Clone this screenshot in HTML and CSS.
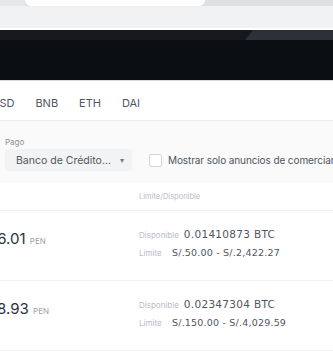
FILE: index.html
```html
<!DOCTYPE html>
<html lang="es">

<head>
    <meta charset="UTF-8">
    <meta name="viewport" content="width=device-width, initial-scale=1.0">
    <title>P2P</title>
    <link rel="stylesheet" href="styles.css">
</head>

<body>
    <div class="chrome">
        <div class="tabstrip">
            <div class="tab-left"></div>
            <div class="tab-active"></div>
            <div class="tab-right"></div>
        </div>
        <div class="addressbar"></div>
    </div>

    <div class="hero">
        <div class="hero-top">
            <div class="hero-strip"></div>
            <div class="hero-panel"></div>
        </div>
    </div>

    <div class="page">
        <nav class="assets">
            <span>BUSD</span>
            <span>BNB</span>
            <span>ETH</span>
            <span>DAI</span>
        </nav>

        <div class="filters">
            <div class="field">
                <label>Pago</label>
                <div class="select">
                    <span>Banco de Crédito...</span>
                    <span class="caret">▾</span>
                </div>
            </div>
            <div class="check">
                <span class="box"></span>
                <span>Mostrar solo anuncios de comerciantes</span>
            </div>
        </div>

        <div class="table-head">
            <span class="col-limit">Limite/Disponible</span>
        </div>

        <div class="row">
            <div class="price">86.01 <small>PEN</small></div>
            <div class="limits">
                <div class="line"><span class="lbl">Disponible</span><span class="val amount">0.01410873 BTC</span></div>
                <div class="line"><span class="lbl lbl-fixed">Limite</span><span class="val">S/.50.00 - S/.2,422.27</span></div>
            </div>
        </div>

        <div class="row">
            <div class="price">58.93 <small>PEN</small></div>
            <div class="limits">
                <div class="line"><span class="lbl">Disponible</span><span class="val amount">0.02347304 BTC</span></div>
                <div class="line"><span class="lbl lbl-fixed">Limite</span><span class="val">S/.150.00 - S/.4,029.59</span></div>
            </div>
        </div>
    </div>
</body>

</html>
```

FILE: styles.css
```css
body {
    margin: 0;
    font-family: Inter, "Noto Sans", sans-serif;
    background-color: #fff;
    overflow: hidden;
}

.tabstrip {
    display: flex;
    height: 6px;
    background-color: #dfe0e4;
}

.tab-left {
    width: 25px;
    background-color: #e6e7ea;
}

.tab-active {
    width: 180px;
    background-color: #fff;
    border-radius: 0 0 6px 6px;
}

.tab-right {
    flex: 1;
}

.addressbar {
    height: 22px;
    background-color: #f1f2f4;
    border-bottom: 2px solid #fff;
}

.hero {
    height: 50px;
    background-color: #0b0e13;
    border-bottom: 1px solid #d5d7da;
}

.hero-top {
    display: flex;
    height: 10px;
}

.hero-strip {
    flex: 1;
    background-color: #16181e;
}

.hero-panel {
    width: 88px;
    background-color: #2c3038;
    clip-path: polygon(8px 0, 100% 0, 100% 100%, 0 100%);
    margin-left: -8px;
}

.page {
    margin-left: -16px;
}

.assets {
    display: flex;
    gap: 21px;
    height: 40px;
    padding-top: 4px;
    box-sizing: border-box;
    align-items: center;
    font-size: 11px;
    color: #4f5561;
    border-bottom: 1px solid #eaecef;
}

.filters {
    display: flex;
    align-items: flex-end;
    gap: 17px;
    height: 62px;
    padding: 0 0 12px 21px;
    box-sizing: border-box;
    background-color: #fafafa;
    white-space: nowrap;
}

.field label {
    display: block;
    font-size: 8px;
    color: #8a919c;
    margin-bottom: 2px;
}

.select {
    display: flex;
    justify-content: space-between;
    align-items: center;
    width: 127px;
    height: 22px;
    padding: 0 8px 0 11px;
    box-sizing: border-box;
    background-color: #f2f3f4;
    border-radius: 2px;
    font-size: 10.5px;
    color: #4f5561;
}

.caret {
    font-size: 8px;
    color: #707a8a;
}

.check {
    display: flex;
    align-items: center;
    gap: 6px;
    height: 22px;
    font-size: 10px;
    letter-spacing: -0.1px;
    color: #4f5561;
}

.box {
    width: 11px;
    height: 11px;
    border: 1px solid #d3d6db;
    border-radius: 2px;
    background-color: #fff;
}

.table-head {
    height: 27px;
    padding-left: 155px;
    display: flex;
    align-items: center;
    font-size: 7.5px;
    color: #b7bdc6;
    border-bottom: 1px solid #f0f1f3;
}

.row {
    display: flex;
    height: 69px;
    border-bottom: 1px solid #eef0f2;
    white-space: nowrap;
}

.price {
    width: 155px;
    padding-top: 18px;
    font-size: 15px;
    color: #2b3139;
    margin-left: 4px;
}

.price small {
    font-size: 8px;
    color: #9aa1ab;
}

.limits {
    padding-top: 17px;
    margin-left: -4px;
}

.line {
    display: flex;
    align-items: baseline;
    height: 19px;
}

.lbl {
    font-size: 8px;
    color: #b7bdc6;
    margin-right: 5px;
}

.lbl-fixed {
    width: 28px;
}

.val {
    font-family: "DejaVu Sans", sans-serif;
    font-size: 9.5px;
    letter-spacing: 0.2px;
    color: #4f5561;
}

.amount {
    font-size: 10.5px;
    letter-spacing: 0.3px;
}
```
